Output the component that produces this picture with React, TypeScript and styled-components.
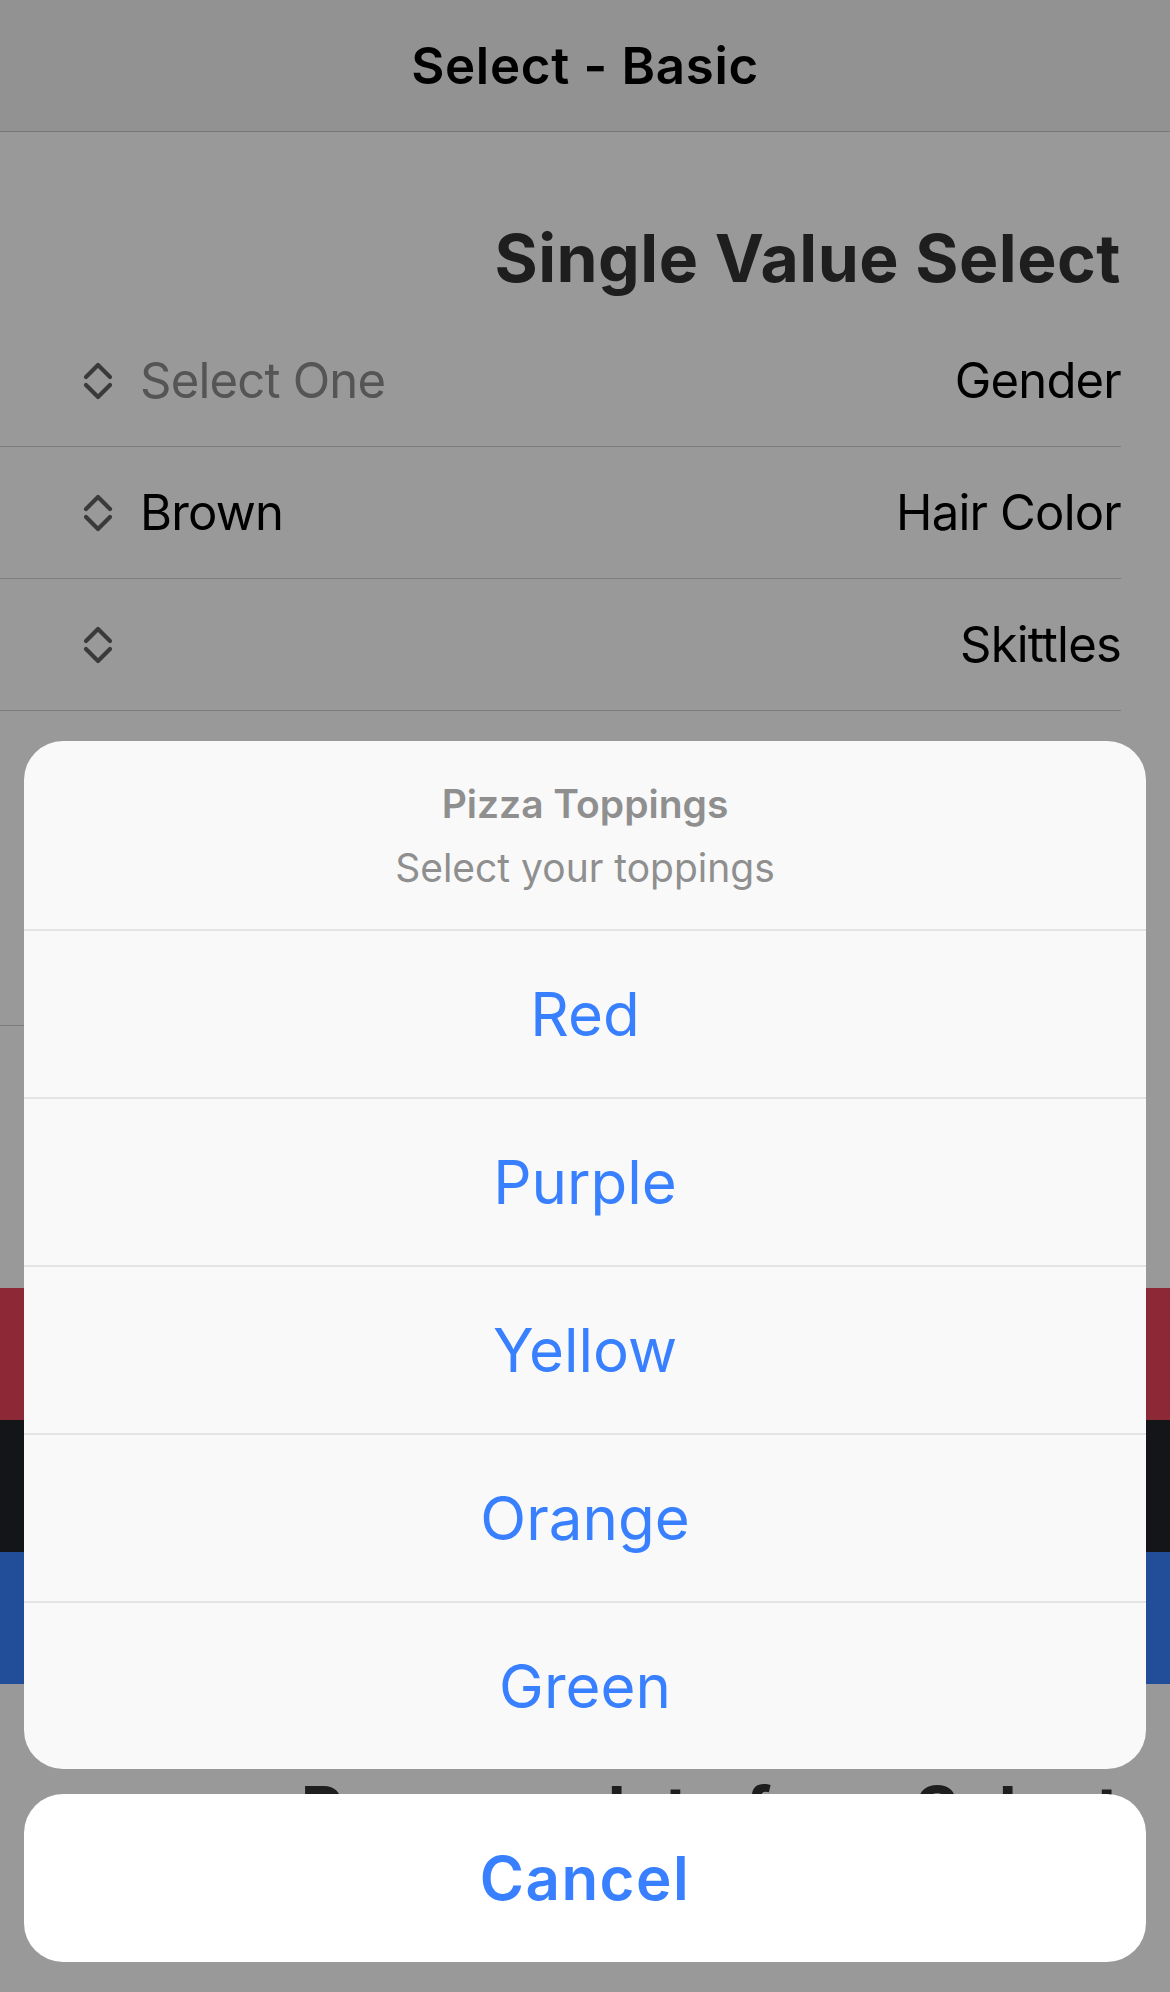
import React from 'react';
import styled, { createGlobalStyle, css } from 'styled-components';

const GlobalStyle = createGlobalStyle`
  html, body { margin: 0; padding: 0; }
  body {
    font-family: Inter, "Liberation Sans", sans-serif;
    background: #ffffff;
    -webkit-font-smoothing: antialiased;
  }
  * { box-sizing: border-box; }
`;

const tones = {
  danger: '#eb445a',
  dark: '#222428',
  primary: '#3880ff',
} as const;

type Tone = keyof typeof tones;

const Page = styled.div`
  position: relative;
  min-height: 1992px;
  background: #ffffff;
  overflow: hidden;
`;

const NavBar = styled.header`
  height: 132px;
  background: #f4f4f4;
  border-bottom: 1px solid #c8c8c8;
  display: flex;
  align-items: center;
  justify-content: center;
`;

const NavTitle = styled.h1`
  margin: 0;
  font-size: 51px;
  line-height: 60px;
  font-weight: 600;
  letter-spacing: 0.7px;
  color: #000;
`;

const Section = styled.section`
  display: flex;
  flex-direction: column;
`;

const SectionHeading = styled.h2<{ $after?: number }>`
  margin: 86px 49px ${(p) => p.$after ?? 17}px 0;
  font-size: 66px;
  line-height: 80px;
  font-weight: 700;
  letter-spacing: 0.5px;
  color: #333333;
  text-align: right;
  white-space: nowrap;
`;

const Row = styled.div<{ $tone?: Tone }>`
  height: 132px;
  display: flex;
  align-items: center;
  justify-content: space-between;
  padding-left: 83px;
  font-size: 49px;
  letter-spacing: -0.8px;
  color: #000;
  ${(p) =>
    p.$tone
      ? css`
          background: ${tones[p.$tone]};
          padding-right: 49px;
          color: #ffffff;
        `
      : css`
          margin-right: 49px;
          border-bottom: 1px solid #d1d1d6;
        `}
`;

const SelectControl = styled.div`
  display: flex;
  align-items: center;
  gap: 27px;
`;

const SelectValue = styled.span<{ $placeholder?: boolean }>`
  color: ${(p) => (p.$placeholder ? '#8e8e8e' : 'inherit')};
`;

const Label = styled.span`
  color: inherit;
`;

const Chevrons = ({ color = '#616161' }: { color?: string }) => (
  <svg width="30" height="38" viewBox="0 0 30 38" fill="none">
    <path d="M3 15 L15 3 L27 15" stroke={color} strokeWidth="4.2" strokeLinecap="round" strokeLinejoin="round" />
    <path d="M3 23 L15 35 L27 23" stroke={color} strokeWidth="4.2" strokeLinecap="round" strokeLinejoin="round" />
  </svg>
);

const Backdrop = styled.div`
  position: absolute;
  inset: 0;
  background: rgba(0, 0, 0, 0.4);
`;

const Sheet = styled.div`
  position: absolute;
  left: 24px;
  right: 24px;
  bottom: 30px;
  display: flex;
  flex-direction: column;
  gap: 25px;
`;

const SheetGroup = styled.div<{ $cancel?: boolean }>`
  background: ${(p) => (p.$cancel ? '#ffffff' : '#f9f9f9')};
  border-radius: 39px;
  overflow: hidden;
  display: flex;
  flex-direction: column;
`;

const SheetHeader = styled.div`
  padding: 39px 20px 37px;
  display: flex;
  flex-direction: column;
  align-items: center;
  gap: 16px;
`;

const SheetTitle = styled.div`
  font-size: 39px;
  line-height: 48px;
  font-weight: 600;
  color: #8f8f8f;
`;

const SheetSubtitle = styled.div`
  font-size: 39px;
  line-height: 48px;
  font-weight: 400;
  color: #8f8f8f;
`;

const SheetButton = styled.button<{ $cancel?: boolean }>`
  height: 168px;
  border: 0;
  border-top: ${(p) => (p.$cancel ? '0' : '2px solid #e4e4e4')};
  background: transparent;
  font-family: inherit;
  font-size: 60px;
  font-weight: ${(p) => (p.$cancel ? 600 : 400)};
  letter-spacing: ${(p) => (p.$cancel ? '1.5px' : '0')};
  color: #3880ff;
  display: flex;
  align-items: center;
  justify-content: center;
  padding: 0;
`;

const singleRows = [
  { value: 'Select One', placeholder: true, label: 'Gender' },
  { value: 'Brown', placeholder: false, label: 'Hair Color' },
  { value: '', placeholder: false, label: 'Skittles' },
];

const colorRows: { tone: Tone; value: string; label: string }[] = [
  { tone: 'danger', value: 'Red', label: 'Danger' },
  { tone: 'dark', value: 'Black', label: 'Dark' },
  { tone: 'primary', value: 'Blue', label: 'Primary' },
];

const toppings = ['Red', 'Purple', 'Yellow', 'Orange', 'Green'];

export default function App() {
  return (
    <Page>
      <GlobalStyle />
      <NavBar>
        <NavTitle>Select - Basic</NavTitle>
      </NavBar>

      <Section>
        <SectionHeading>Single Value Select</SectionHeading>
        {singleRows.map((r) => (
          <Row key={r.label}>
            <SelectControl>
              <Chevrons />
              <SelectValue $placeholder={r.placeholder}>{r.value}</SelectValue>
            </SelectControl>
            <Label>{r.label}</Label>
          </Row>
        ))}
      </Section>

      <Section>
        <SectionHeading>Multiple Value Select</SectionHeading>
        <Row>
          <SelectControl>
            <Chevrons />
            <SelectValue>Pepperoni</SelectValue>
          </SelectControl>
          <Label>Toppings</Label>
        </Row>
      </Section>

      <Section>
        <SectionHeading $after={96}>Colors</SectionHeading>
        {colorRows.map((r) => (
          <Row key={r.tone} $tone={r.tone}>
            <SelectControl>
              <Chevrons color="#ffffff" />
              <SelectValue>{r.value}</SelectValue>
            </SelectControl>
            <Label>{r.label}</Label>
          </Row>
        ))}
      </Section>

      <Section>
        <SectionHeading>Pre-populate from Select</SectionHeading>
      </Section>

      <Backdrop />
      <Sheet>
        <SheetGroup>
          <SheetHeader>
            <SheetTitle>Pizza Toppings</SheetTitle>
            <SheetSubtitle>Select your toppings</SheetSubtitle>
          </SheetHeader>
          {toppings.map((t) => (
            <SheetButton key={t}>{t}</SheetButton>
          ))}
        </SheetGroup>
        <SheetGroup $cancel>
          <SheetButton $cancel>Cancel</SheetButton>
        </SheetGroup>
      </Sheet>
    </Page>
  );
}
